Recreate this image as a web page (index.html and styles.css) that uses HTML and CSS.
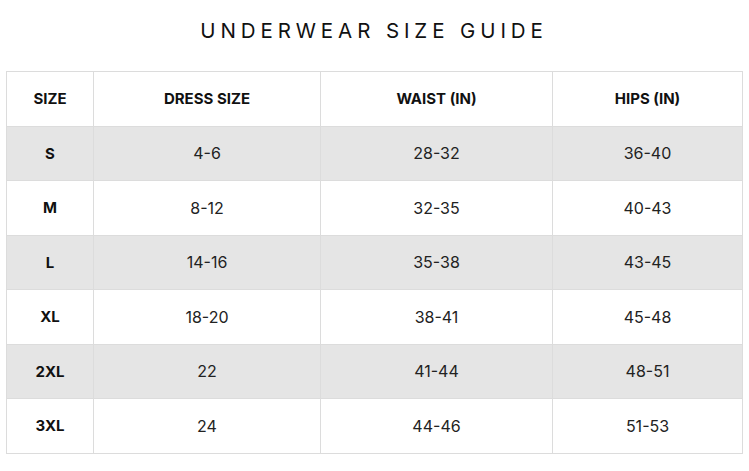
FILE: index.html
```html
<!DOCTYPE html>
<html>
<head>
<meta charset="utf-8">
<link rel="stylesheet" href="styles.css">
</head>
<body>
<div class="page">
  <h1 class="title">UNDERWEAR SIZE GUIDE</h1>
  <table class="size-table">
    <colgroup>
      <col class="c1"><col class="c2"><col class="c3"><col class="c4">
    </colgroup>
    <thead>
      <tr><th>SIZE</th><th>DRESS SIZE</th><th>WAIST (IN)</th><th>HIPS (IN)</th></tr>
    </thead>
    <tbody>
      <tr class="alt"><th>S</th><td>4-6</td><td>28-32</td><td>36-40</td></tr>
      <tr><th>M</th><td>8-12</td><td>32-35</td><td>40-43</td></tr>
      <tr class="alt"><th>L</th><td>14-16</td><td>35-38</td><td>43-45</td></tr>
      <tr><th>XL</th><td>18-20</td><td>38-41</td><td>45-48</td></tr>
      <tr class="alt"><th>2XL</th><td>22</td><td>41-44</td><td>48-51</td></tr>
      <tr><th>3XL</th><td>24</td><td>44-46</td><td>51-53</td></tr>
    </tbody>
  </table>
</div>
</body>
</html>
```

FILE: styles.css
```css
html, body {
  margin: 0;
  padding: 0;
  background: #fff;
}
.page {
  padding: 16px 7px 0 6px;
  font-family: "Inter", "Open Sans", sans-serif;
  color: #111;
}
.title {
  margin: 0 0 25px 0;
  text-align: center;
  font-family: "Inter", sans-serif;
  font-weight: 400;
  font-size: 20.5px;
  letter-spacing: 4.9px;
  line-height: 30px;
  color: #111;
}
.size-table {
  width: 736px;
  border-collapse: collapse;
  table-layout: fixed;
}
.c1 { width: 87px; }
.c2 { width: 227px; }
.c3 { width: 232px; }
.c4 { width: 190px; }
.size-table th,
.size-table td {
  border: 1px solid #dcdcdc;
  height: 53.5px;
  padding: 0;
  text-align: center;
  vertical-align: middle;
}
.size-table th {
  font-weight: 650;
  font-size: 15px;
  color: #111;
}
.size-table td {
  font-weight: 400;
  font-size: 16px;
  color: #222;
}
.size-table tr.alt th,
.size-table tr.alt td {
  background: #e5e5e5;
}
```
